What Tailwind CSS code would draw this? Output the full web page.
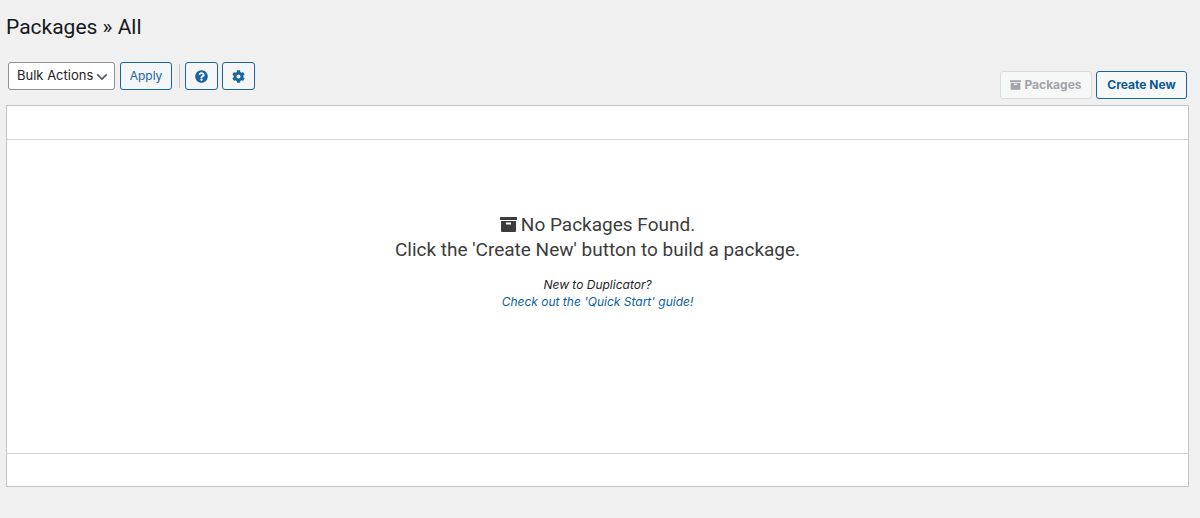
<!DOCTYPE html>
<html lang="en">
<head>
  <title>Packages » All</title>
  <meta charset="UTF-8" />
  <meta name="viewport" content="width=device-width, initial-scale=1" />
  <script src="https://cdn.jsdelivr.net/npm/@tailwindcss/browser@4"></script>
</head>
<body class="min-h-screen bg-[#f0f0f1] pl-[6px] pr-[11px] pt-3 font-['Inter',sans-serif] text-[13px] text-[#2c3338]">

  <h1 class="font-['Roboto',sans-serif] text-[21px] leading-[30px] text-[#15181c]">Packages » All</h1>

  <!-- Toolbar -->
  <div class="flex items-start justify-between pt-5 pb-[6px]">
    <form class="flex items-center pl-[2px]">
      <div class="relative mr-[5px]">
        <select id="bulk-action" aria-label="Select bulk action" class="h-7 w-[107px] appearance-none rounded-[3px] border border-[#8c8f94] bg-white pl-2 pr-5 text-[13px] text-[#1d2327]">
          <option>Bulk Actions</option>
          <option>Delete</option>
        </select>
        <svg class="pointer-events-none absolute top-[9px] right-[7px] h-3 w-3" viewBox="0 0 12 12" fill="none" stroke="#50575e" stroke-width="1.7" aria-hidden="true">
          <path d="M1.300 3.300 6 8l4.700-4.700"/>
        </svg>
      </div>
      <button type="button" class="h-7 w-[52px] rounded-[3px] border border-[#1b659f] bg-[#f3f5f6] text-[12px] text-[#1b659f]">Apply</button>
      <span class="mr-[5px] ml-[7px] h-6 w-px bg-[#c3c4c7]"></span>
      <button type="button" aria-label="Help" class="mr-1 flex h-7 w-[33px] items-center justify-center rounded-[3px] border border-[#1b659f] bg-[#f3f5f6] text-[#1b659f]">
        <svg class="h-[13px] w-[13px]" viewBox="0 0 512 512" fill="currentColor">
          <path d="M504 256c0 137-111 248-248 248S8 393 8 256 119 8 256 8s248 111 248 248zM262.700 90c-54.500 0-89.300 23-116.500 63.800-3.500 5.300-2.400 12.400 2.700 16.300l34.700 26.300c5.200 3.900 12.600 3 16.700-2.100 17.900-22.700 30.100-35.800 57.300-35.800 20.400 0 45.700 13.100 45.700 33 0 15-12.400 22.700-32.500 34C247.100 238.500 216 254.900 216 296v4c0 6.600 5.400 12 12 12h56c6.600 0 12-5.400 12-12v-1.300c0-28.500 83.200-29.600 83.200-106.700 0-58-60.200-102-116.500-102zM256 338c-25.400 0-46 20.600-46 46s20.600 46 46 46 46-20.600 46-46-20.600-46-46-46z"/>
        </svg>
      </button>
      <button type="button" aria-label="Settings" class="flex h-7 w-[33px] items-center justify-center rounded-[3px] border border-[#1b659f] bg-[#f3f5f6] text-[#1b659f]">
        <svg class="h-[13px] w-[13px]" viewBox="0 0 512 512" fill="currentColor">
          <path d="M487.400 315.700l-42.600-24.600c4.300-23.200 4.300-47 0-70.200l42.600-24.600c4.900-2.800 7.100-8.600 5.500-14-11.100-35.600-30-67.800-54.700-94.600-3.800-4.100-10-5.100-14.800-2.300L380.800 110c-17.900-15.400-38.500-27.300-60.800-35.100V25.800c0-5.600-3.900-10.500-9.400-11.700-36.700-8.200-74.300-7.800-109.200 0-5.500 1.200-9.400 6.100-9.400 11.700V75c-22.200 7.900-42.800 19.800-60.800 35.100L88.700 85.500c-4.900-2.800-11-1.900-14.800 2.300-24.700 26.700-43.600 58.900-54.700 94.600-1.700 5.400.6 11.200 5.500 14L67.300 221c-4.300 23.200-4.300 47 0 70.200l-42.600 24.600c-4.900 2.800-7.100 8.600-5.500 14 11.100 35.600 30 67.800 54.700 94.600 3.800 4.100 10 5.100 14.800 2.300l42.600-24.600c17.900 15.400 38.500 27.300 60.800 35.100v49.200c0 5.600 3.900 10.500 9.400 11.700 36.700 8.200 74.300 7.800 109.200 0 5.500-1.200 9.400-6.100 9.400-11.700v-49.200c22.200-7.900 42.800-19.800 60.800-35.100l42.600 24.600c4.900 2.800 11 1.900 14.800-2.300 24.700-26.700 43.600-58.900 54.700-94.600 1.500-5.500-.7-11.300-5.600-14.100zM256 336c-44.100 0-80-35.900-80-80s35.900-80 80-80 80 35.900 80 80-35.900 80-80 80z"/>
        </svg>
      </button>
    </form>

    <div class="flex gap-1 pt-[9px] pr-[2px]">
      <button type="button" disabled class="flex h-7 w-[92px] items-center justify-center gap-[3px] rounded-[3px] border border-[#dcdcde] bg-[#f6f7f7] text-[12px] font-bold text-[#a0a5aa]">
        <svg class="h-[10px] w-[11px]" viewBox="0 0 17 15" fill="currentColor" fill-rule="evenodd" aria-hidden="true">
          <path d="M.5 0h16q.5 0 .5.500v2.500H0V.5Q0 0 .5 0zM1 4h15v10q0 1-1 1H2q-1 0-1-1zM6 5.500v2h5v-2z"/>
        </svg>
        Packages
      </button>
      <a href="#new" class="flex h-7 w-[91px] items-center justify-center rounded-[3px] border border-[#1b659f] bg-[#f6f7f7] text-[12px] font-bold text-[#0a5a94]">Create New</a>
    </div>
  </div>

  <!-- Packages table -->
  <table class="w-full border-collapse border border-[#c3c4c7] bg-white">
    <thead>
      <tr><th class="h-[34px] border-b border-[#d0d1d4]"></th></tr>
    </thead>
    <tbody>
      <tr>
        <td class="h-[314px] pb-[72px] text-center align-middle">
          <div class="font-['Roboto',sans-serif] text-[19px] leading-[25px] text-[#3c3c3c]">
            <p class="flex items-center justify-center gap-1">
              <svg class="h-[15px] w-[17px]" viewBox="0 0 17 15" fill="currentColor" fill-rule="evenodd" aria-hidden="true">
                <path d="M.5 0h16q.5 0 .5.500v2.500H0V.5Q0 0 .5 0zM1 4h15v10q0 1-1 1H2q-1 0-1-1zM6 5.500v2h5v-2z"/>
              </svg>
              No Packages Found.
            </p>
            <p>Click the 'Create New' button to build a package.</p>
          </div>
          <div class="mt-[14px] text-[12px] leading-[17px] italic text-[#1d2327]">
            <p>New to Duplicator?</p>
            <a href="#quick-start" class="text-[#0a5f9e]">Check out the 'Quick Start' guide!</a>
          </div>
        </td>
      </tr>
    </tbody>
    <tfoot>
      <tr><th class="h-[33px] border-t border-[#d0d1d4]"></th></tr>
    </tfoot>
  </table>

</body>
</html>
